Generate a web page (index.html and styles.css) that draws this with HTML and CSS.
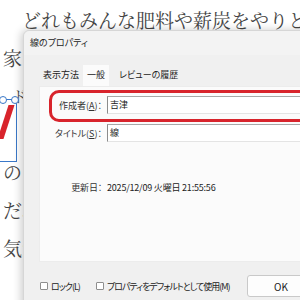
FILE: index.html
```html
<!DOCTYPE html>
<html lang="ja">
<head>
    <meta charset="UTF-8">
    <title>線のプロパティ</title>
    <link rel="stylesheet" href="styles.css">
</head>
<body>
    <div class="doc">
        <p class="first">どれもみんな肥料や薪炭をやりとりして</p>
        <p>家の中はしんとして</p>
        <p class="third">ドぞうの中から</p>
        <p>&nbsp;</p>
        <p>のぞきこみました</p>
        <p>だれもいません</p>
        <p>気がつくと</p>
    </div>

    <div class="selection">
        <span class="handle h1"></span>
        <span class="handle h2"></span>
        <span class="stroke"></span>
    </div>

    <div class="dialog">
        <div class="titlebar">線のプロパティ</div>

        <div class="tabs">
            <span class="tab">表示方法</span>
            <span class="tab active">一般</span>
            <span class="tab">レビューの履歴</span>
        </div>

        <div class="panel">
            <div class="highlight"></div>
            <div class="row">
                <label>作成者(<u>A</u>)：</label>
                <div class="field">吉津</div>
            </div>
            <div class="row">
                <label>タイトル(<u>S</u>)：</label>
                <div class="field">線</div>
            </div>
            <div class="row date">
                <label>更新日：</label>
                <span>2025/12/09 火曜日 21:55:56</span>
            </div>
        </div>

        <div class="footer">
            <span class="check"><i></i>ロック(L)</span>
            <span class="check"><i></i>プロパティをデフォルトとして使用(M)</span>
            <button class="ok">OK</button>
        </div>
    </div>
</body>
</html>
```

FILE: styles.css
```css
body {
    margin: 0;
    width: 300px;
    height: 300px;
    overflow: hidden;
    position: relative;
    background: #ffffff;
}

.doc {
    padding: 1px 0 0 3px;
    font-family: "Noto Serif CJK JP", "Noto Sans CJK JP", serif;
    font-size: 19px;
    line-height: 38px;
    color: #444;
    white-space: nowrap;
}

.doc p {
    margin: 0;
}

.doc .first {
    text-indent: 19px;
}

.doc .third {
    text-indent: 9px;
    font-size: 15px;
}

.selection {
    position: absolute;
    left: -4px;
    top: 99px;
    width: 19px;
    height: 61px;
    border: 1px solid #3a78c8;
    background: #fff;
}

.handle {
    position: absolute;
    top: -4px;
    width: 6px;
    height: 6px;
    border: 1px solid #3a78c8;
    border-radius: 50%;
    background: #fff;
}

.h1 { left: 2px; }
.h2 { left: 14px; }

.stroke {
    position: absolute;
    left: 6px;
    top: 5px;
    width: 6px;
    height: 34px;
    background: #d8242c;
    transform: skewX(-18deg);
}

.dialog {
    position: absolute;
    left: 23px;
    top: 30px;
    width: 320px;
    height: 280px;
    background: #f0f0f0;
    border: 1px solid #d6d6d6;
    border-radius: 6px 0 0 0;
    box-shadow: -2px 0 8px rgba(0, 0, 0, 0.2);
    font-family: "Noto Sans CJK JP", sans-serif;
    font-size: 9px;
    font-feature-settings: "palt";
    color: #222;
    white-space: nowrap;
}

.titlebar {
    height: 24px;
    line-height: 24px;
    padding-left: 6px;
    background: #f3f3f3;
    border-radius: 6px 0 0 0;
}

.tabs {
    display: flex;
    align-items: flex-end;
    height: 31px;
    padding-left: 15px;
}

.tab {
    padding: 0 4px;
    height: 21px;
    line-height: 20px;
}

.tab.active {
    background: #fbfbfb;
    margin-right: 6px;
}

.panel {
    position: relative;
    margin-left: 15px;
    height: 176px;
    padding-top: 9px;
    box-sizing: border-box;
    background: #fbfbfb;
    border: 1px solid #ececec;
    border-right: none;
}

.highlight {
    position: absolute;
    left: 9px;
    top: 3px;
    width: 300px;
    height: 32px;
    border: 3px solid #d8242c;
    border-radius: 10px;
    box-sizing: border-box;
}

.row {
    display: grid;
    grid-template-columns: 62px 1fr;
    column-gap: 5px;
    align-items: center;
    margin-bottom: 10px;
}

.row label {
    text-align: right;
    color: #333;
}

.row u {
    text-decoration-thickness: 1px;
}

.field {
    height: 18px;
    line-height: 16px;
    padding-left: 2px;
    box-sizing: border-box;
    background: #fff;
    border: 1px solid #e4e4e4;
    border-top-color: #a8a8a8;
    border-left-color: #8c8c8c;
    border-right: none;
}

.row.date {
    margin-top: 39px;
    letter-spacing: -0.2px;
}

.footer {
    display: flex;
    align-items: center;
    gap: 16px;
    padding: 13px 29px 0 16px;
    letter-spacing: -1px;
}

.check {
    display: flex;
    align-items: center;
    gap: 3px;
    flex-shrink: 0;
}

.check i {
    width: 6px;
    height: 6px;
    border: 1px solid #8e8e8e;
    border-radius: 1px;
    background: #fff;
}

.ok {
    margin-left: auto;
    flex-shrink: 0;
    width: 68px;
    height: 22px;
    background: #fdfdfd;
    border: 1px solid #c9c9c9;
    border-radius: 3px;
    font-family: "Noto Sans CJK JP", sans-serif;
    font-size: 10px;
    letter-spacing: 0;
    color: #222;
}
```
